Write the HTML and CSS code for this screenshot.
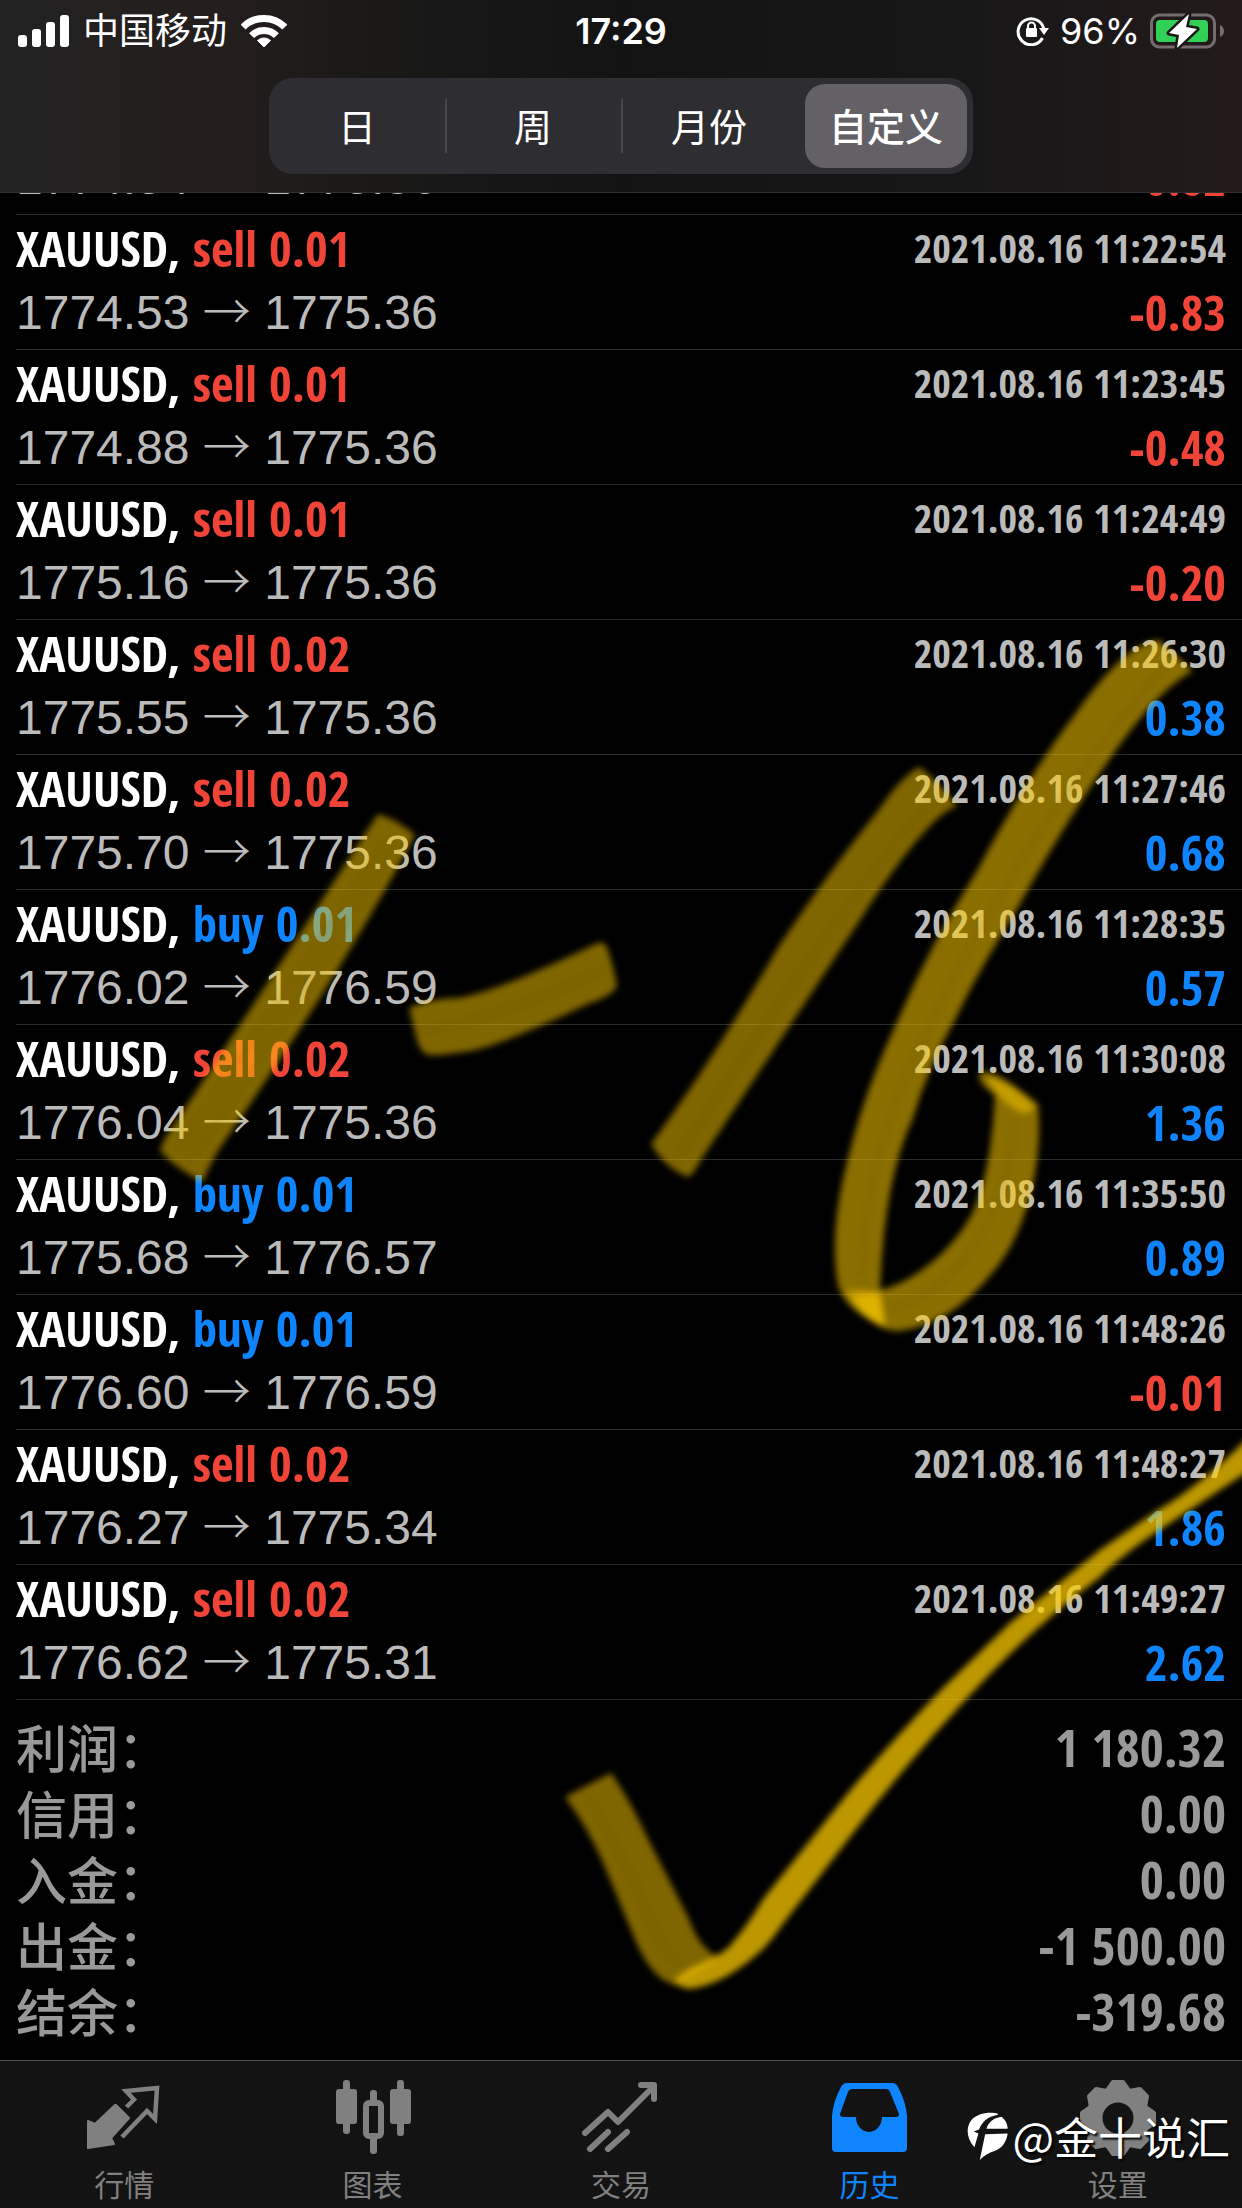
FILE: index.html
```html
<!DOCTYPE html>
<html lang="zh-CN">
<head>
<meta charset="UTF-8">
<meta name="viewport" content="width=device-width, initial-scale=1.0">
<title>历史</title>
<link rel="stylesheet" href="styles.css">
</head>
<body>
<header class="header">
    <div class="status">
        <div class="status-left">
            <svg width="51" height="32" viewBox="0 0 51 32" fill="#fff">
                <rect x="0" y="20" width="9" height="12" rx="3"/>
                <rect x="14" y="14" width="9" height="18" rx="3"/>
                <rect x="28" y="7" width="9" height="25" rx="3"/>
                <rect x="42" y="0" width="9" height="32" rx="3"/>
            </svg>
            <span>中国移动</span>
            <svg width="46" height="34" viewBox="0 0 46 34" fill="none" stroke="#fff" stroke-width="7">
                <path d="M2.1 13.1A29.5 29.5 0 0 1 43.9 13.1"/>
                <path d="M10.6 21.6A17.5 17.5 0 0 1 35.4 21.6"/>
                <path d="M23 33L16.5 26.5A9.5 9.5 0 0 1 29.5 26.5Z" fill="#fff" stroke-width="1" stroke-linejoin="round"/>
            </svg>
        </div>
        <div class="clock">17:29</div>
        <div class="status-right">
            <svg width="34" height="30" viewBox="0 0 34 30">
                <path d="M26.5 22A13 13 0 1 1 28 14" fill="none" stroke="#fff" stroke-width="3"/>
                <path d="M23 12H33L28 19Z" fill="#fff"/>
                <rect x="10" y="12" width="11" height="9" rx="1" fill="#fff"/>
                <path d="M12 13V10A3.5 3.5 0 0 1 19 10V13" fill="none" stroke="#fff" stroke-width="2"/>
            </svg>
            <span>96%</span>
            <svg width="74" height="36" viewBox="0 0 74 36">
                <rect x="1.5" y="2" width="63" height="32" rx="8" fill="none" stroke="#756d6d" stroke-width="3"/>
                <rect x="6" y="7" width="52" height="22" rx="4" fill="#31d158"/>
                <path d="M70 12Q74 14 74 18T70 24Z" fill="#756d6d"/>
                <path d="M39 1L19 20L29 22L27 35L47 16L36 14Z" fill="#fff" stroke="#1c1818" stroke-width="5" paint-order="stroke" stroke-linejoin="round"/>
            </svg>
        </div>
    </div>
    <div class="segments">
        <button type="button">日</button>
        <button type="button">周</button>
        <button type="button">月份</button>
        <button type="button" class="selected">自定义</button>
    </div>
</header>

<main class="history">
    <ul class="deals">
        <li>
            <div class="line"><span class="price">1774.54 <span class="arrow">→</span> 1775.36</span><span class="value sell">-0.82</span></div>
        </li>
        <li>
            <div class="line"><span class="symbol">XAUUSD, <span class="sell">sell 0.01</span></span><time>2021.08.16 11:22:54</time></div>
            <div class="line"><span class="price">1774.53 <span class="arrow">→</span> 1775.36</span><span class="value sell">-0.83</span></div>
        </li>
        <li>
            <div class="line"><span class="symbol">XAUUSD, <span class="sell">sell 0.01</span></span><time>2021.08.16 11:23:45</time></div>
            <div class="line"><span class="price">1774.88 <span class="arrow">→</span> 1775.36</span><span class="value sell">-0.48</span></div>
        </li>
        <li>
            <div class="line"><span class="symbol">XAUUSD, <span class="sell">sell 0.01</span></span><time>2021.08.16 11:24:49</time></div>
            <div class="line"><span class="price">1775.16 <span class="arrow">→</span> 1775.36</span><span class="value sell">-0.20</span></div>
        </li>
        <li>
            <div class="line"><span class="symbol">XAUUSD, <span class="sell">sell 0.02</span></span><time>2021.08.16 11:26:30</time></div>
            <div class="line"><span class="price">1775.55 <span class="arrow">→</span> 1775.36</span><span class="value buy">0.38</span></div>
        </li>
        <li>
            <div class="line"><span class="symbol">XAUUSD, <span class="sell">sell 0.02</span></span><time>2021.08.16 11:27:46</time></div>
            <div class="line"><span class="price">1775.70 <span class="arrow">→</span> 1775.36</span><span class="value buy">0.68</span></div>
        </li>
        <li>
            <div class="line"><span class="symbol">XAUUSD, <span class="buy">buy 0.01</span></span><time>2021.08.16 11:28:35</time></div>
            <div class="line"><span class="price">1776.02 <span class="arrow">→</span> 1776.59</span><span class="value buy">0.57</span></div>
        </li>
        <li>
            <div class="line"><span class="symbol">XAUUSD, <span class="sell">sell 0.02</span></span><time>2021.08.16 11:30:08</time></div>
            <div class="line"><span class="price">1776.04 <span class="arrow">→</span> 1775.36</span><span class="value buy">1.36</span></div>
        </li>
        <li>
            <div class="line"><span class="symbol">XAUUSD, <span class="buy">buy 0.01</span></span><time>2021.08.16 11:35:50</time></div>
            <div class="line"><span class="price">1775.68 <span class="arrow">→</span> 1776.57</span><span class="value buy">0.89</span></div>
        </li>
        <li>
            <div class="line"><span class="symbol">XAUUSD, <span class="buy">buy 0.01</span></span><time>2021.08.16 11:48:26</time></div>
            <div class="line"><span class="price">1776.60 <span class="arrow">→</span> 1776.59</span><span class="value sell">-0.01</span></div>
        </li>
        <li>
            <div class="line"><span class="symbol">XAUUSD, <span class="sell">sell 0.02</span></span><time>2021.08.16 11:48:27</time></div>
            <div class="line"><span class="price">1776.27 <span class="arrow">→</span> 1775.34</span><span class="value buy">1.86</span></div>
        </li>
        <li>
            <div class="line"><span class="symbol">XAUUSD, <span class="sell">sell 0.02</span></span><time>2021.08.16 11:49:27</time></div>
            <div class="line"><span class="price">1776.62 <span class="arrow">→</span> 1775.31</span><span class="value buy">2.62</span></div>
        </li>
    </ul>
    <dl class="totals">
        <div><dt>利润：</dt><dd>1 180.32</dd></div>
        <div><dt>信用：</dt><dd>0.00</dd></div>
        <div><dt>入金：</dt><dd>0.00</dd></div>
        <div><dt>出金：</dt><dd>-1 500.00</dd></div>
        <div><dt>结余：</dt><dd>-319.68</dd></div>
    </dl>
</main>

<nav class="tabs">
    <a href="#quotes">
        <svg width="80" height="80" viewBox="0 0 80 80">
            <path d="M32 27L45 40L27 60L30 66L4 70L4 43L11 46L31 27Z" fill="currentColor" stroke="currentColor" stroke-width="2" stroke-linejoin="round"/>
            <path d="M42.5 29L50 21.5L42 13L73 10L71 41L63 33L38 59" fill="none" stroke="currentColor" stroke-width="4.5"/>
        </svg>
        <span>行情</span>
    </a>
    <a href="#charts">
        <svg width="80" height="80" viewBox="0 0 80 80" fill="currentColor">
            <rect x="3" y="11" width="21" height="35" rx="3"/>
            <rect x="10" y="2" width="7" height="54" rx="3"/>
            <rect x="57" y="11" width="21" height="35" rx="3"/>
            <rect x="64" y="2" width="7" height="56" rx="3"/>
            <rect x="33" y="25" width="15" height="33" rx="3" fill="none" stroke="currentColor" stroke-width="6"/>
            <rect x="37" y="12" width="7" height="15" rx="3"/>
            <rect x="37" y="58" width="7" height="18" rx="3"/>
        </svg>
        <span>图表</span>
    </a>
    <a href="#trade">
        <svg width="80" height="80" viewBox="0 0 80 80" fill="none" stroke="currentColor" stroke-width="6" stroke-linecap="round">
            <path d="M4 55L27 34L37 44L72 9M60 7H73V21" stroke-linejoin="round"/>
            <path d="M9 71L27 54M27 71L46 54"/>
        </svg>
        <span>交易</span>
    </a>
    <a href="#history" class="active">
        <svg width="80" height="80" viewBox="0 0 80 80" fill="currentColor">
            <path fill-rule="evenodd" d="M18 5H63Q67 5 69 9Q77 24 78 38V70Q78 74 74 74H7Q3 74 3 70V38Q4 24 12 9Q14 5 18 5ZM24 11Q20 11 19 14L11 36Q11 39 14 39H27A13 15 0 0 0 53 39H67Q70 39 70 36L61 14Q60 11 57 11Z"/>
        </svg>
        <span>历史</span>
    </a>
    <a href="#settings">
        <svg width="80" height="80" viewBox="0 0 80 80" fill="currentColor" stroke="currentColor">
            <defs><path id="tooth" d="M-5 -36H5L12 -26H-12Z" stroke-width="4" stroke-linejoin="round"/></defs>
            <g transform="translate(40 40)">
                <circle r="23.5" fill="none" stroke-width="16"/>
                <use href="#tooth"/>
                <use href="#tooth" transform="rotate(45)"/>
                <use href="#tooth" transform="rotate(90)"/>
                <use href="#tooth" transform="rotate(135)"/>
                <use href="#tooth" transform="rotate(180)"/>
                <use href="#tooth" transform="rotate(225)"/>
                <use href="#tooth" transform="rotate(270)"/>
                <use href="#tooth" transform="rotate(315)"/>
            </g>
        </svg>
        <span>设置</span>
    </a>
</nav>

<!-- marker strokes drawn over the list -->
<svg class="marker" viewBox="0 0 1242 2208">
    <defs>
        <filter id="soft" x="-5%" y="-5%" width="110%" height="110%"><feGaussianBlur stdDeviation="3"/></filter>
    </defs>
    <g filter="url(#soft)" fill="#ffcc00" fill-opacity="0.5">
        <path d="M378 814Q398 820 415 835Q350 960 220 1148Q210 1163 203 1182Q178 1170 160 1151L164 1140Q270 980 378 814Z"/>
        <path d="M409 1008Q430 998 457 998Q490 995 600 942L606 945Q613 963 617 986Q612 996 590 1003Q500 1046 470 1051Q440 1056 428 1055Q420 1052 417 1040Z"/>
        <path d="M919 767Q940 782 957 806Q942 812 929 827Q900 857 858 923L700 1161Q694 1174 688 1177Q665 1168 651 1144Q715 1057 779 946Q830 870 878 811Q900 778 919 767Z"/>
        <path fill-opacity="0.54" d="M1159 640L1193 671Q1160 688 1116 750Q1065 822 1017 909Q975 977 957 1016Q928 1067 913 1118Q884 1180 880 1290L886 1326Q850 1316 838 1286Q828 1230 850 1151Q865 1090 898 1020Q930 945 977 871Q1025 780 1076 713Q1125 643 1159 640Z"/>
        <path fill-opacity="0.54" d="M852 1298L880 1290Q907 1284 937 1258Q967 1230 977 1202Q992 1160 995 1095Q978 1084 979 1074Q990 1064 1038 1104Q1042 1144 1032 1188Q1020 1240 993 1272Q950 1326 898 1331Q870 1330 852 1298Z"/>
        <path fill-opacity="0.5" d="M986 1076Q1012 1082 1036 1108L1024 1114Q997 1102 986 1076Z"/>
        <path fill-opacity="0.4" d="M844 1292Q866 1285 880 1298L884 1326Q862 1316 844 1292Z"/>
        <path d="M565 1797L611 1773Q630 1800 647 1837L688 1917Q700 1950 719 1957Q700 1972 672 1984Q650 1977 634 1937L607 1872Q590 1830 565 1797Z"/>
        <path fill-opacity="0.74" d="M674 1984Q674 1976 700 1964Q715 1958 728 1948Q746 1928 764 1898L853 1787Q900 1732 943 1688L1010 1623L1100 1550L1158 1510Q1200 1486 1250 1436V1470L1167 1525Q1125 1552 1100 1577Q1040 1622 988 1676Q915 1752 853 1833L782 1925Q768 1946 755 1956Q720 1986 688 1989Z"/>
    </g>
    <g fill="none" stroke="#5c4600" stroke-width="3" stroke-opacity="0.22" filter="url(#soft)">
        <path d="M398 838Q330 960 190 1160"/>
        <path d="M385 842Q310 960 178 1148"/>
        <path d="M420 1030Q490 1022 605 970"/>
        <path d="M936 798Q850 890 676 1160"/>
        <path d="M1165 665Q1000 860 900 1090Q860 1200 862 1280"/>
        <path d="M1014 1120Q1012 1200 960 1265Q920 1305 890 1308"/>
        <path d="M590 1800Q620 1850 655 1930Q665 1955 680 1962"/>
    </g>
</svg>

<div class="watermark">
    <svg width="41" height="49" viewBox="0 0 122 146" fill="#fff">
        <path d="M92 5C70 -2 30 2 12 25C-5 50 0 80 22 105L34 64L20 58L36 52C44 30 60 14 92 8Z"/>
        <path d="M102 14C116 24 121 38 121 50L58 50C62 32 78 18 102 14Z"/>
        <path d="M54 66L121 64C118 88 105 108 82 116C65 121 50 130 38 143Z"/>
    </svg>
    <span>@金十说汇</span>
</div>
</body>
</html>
```
FILE: styles.css
```css
* {
    box-sizing: border-box;
}

body {
    display: flex;
    flex-direction: column;
    position: relative;
    height: 100vh;
    margin: 0;
    overflow: hidden;
    background-color: #000;
    color: #fff;
    font-family: "Liberation Sans", "Noto Sans CJK SC", sans-serif;
}

svg {
    display: block;
    flex: none;
}

/* header */
.header {
    flex: none;
    padding-bottom: 18px;
    border-bottom: 1px solid #303030;
    background: linear-gradient(to right, #222 0%, #241e1d 17%, #1a1918 30%, #131313 50%, #181717 78%, #241a1b 100%);
}

.status {
    display: grid;
    grid-template-columns: 1fr auto 1fr;
    align-items: center;
    height: 60px;
    padding: 2px 18px 0;
    font-family: Inter, "Noto Sans CJK SC", sans-serif;
    font-size: 36px;
    line-height: 40px;
}

.status-left,
.status-right {
    display: flex;
    align-items: center;
    gap: 14px;
}

.status-right {
    justify-content: flex-end;
    gap: 10px;
}

.clock {
    font-weight: 600;
}

.segments {
    display: grid;
    grid-template-columns: repeat(4, 1fr);
    max-width: 704px;
    height: 96px;
    margin: 18px auto 0;
    padding: 6px 0;
    border-radius: 24px;
    background-color: #2e2d31;
}

.segments button {
    position: relative;
    padding: 0 0 3px;
    border: 0;
    border-radius: 20px;
    background: none;
    color: #fff;
    font-family: "Noto Sans CJK SC", sans-serif;
    font-size: 38px;
    line-height: 40px;
}

.segments button + button:not(.selected)::before {
    content: "";
    position: absolute;
    left: 0;
    top: 15px;
    bottom: 15px;
    width: 2px;
    background-color: #48474b;
}

.segments .selected {
    margin: 0 6px 0 8px;
    background-color: #636166;
    font-weight: 500;
}

/* deals */
.history {
    display: flex;
    flex: 1;
    flex-direction: column;
    justify-content: flex-end;
    min-height: 0;
    overflow: hidden;
}

.deals {
    margin: 0 0 0 16px;
    padding: 0;
    list-style: none;
}

.deals li {
    padding: 2px 16px 4px 0;
    border-bottom: 1px solid #2c2c2c;
}

.line {
    display: flex;
    justify-content: space-between;
    height: 64px;
    line-height: 64px;
    white-space: nowrap;
}

.symbol,
.value,
.line time,
.totals dd {
    font-family: "Open Sans Condensed", "Liberation Sans", sans-serif;
    font-size: 49px;
    font-weight: bold;
    line-height: 62px;
}

.line time {
    color: #bbb;
    font-size: 40px;
}

.price {
    color: #bbb;
    font-size: 48px;
}

.arrow {
    font-family: "Noto Sans CJK SC", sans-serif;
    font-weight: 300;
    line-height: 1;
}

.sell {
    color: #f04438;
}

.buy {
    color: #0f84ff;
}

/* totals */
.totals {
    margin: 0;
    padding: 15px 16px;
    color: #999;
}

.totals div {
    display: flex;
    justify-content: space-between;
    height: 66px;
}

.totals dt {
    font-family: "Noto Sans CJK SC", sans-serif;
    font-size: 51px;
    font-weight: 500;
    line-height: 62px;
}

.totals dd {
    margin: 0;
    font-size: 52px;
    line-height: 64px;
}

/* bottom tabs */
.tabs {
    display: grid;
    flex: none;
    grid-template-columns: repeat(5, 1fr);
    height: 148px;
    padding-top: 17px;
    border-top: 1px solid #4a4a4a;
    background-color: #131313;
}

.tabs a {
    display: flex;
    flex-direction: column;
    align-items: center;
    gap: 5px;
    color: #808080;
    font-family: "Noto Sans CJK SC", sans-serif;
    font-size: 30px;
    line-height: 40px;
    text-decoration: none;
}

.tabs .active {
    color: #0f84ff;
}

.marker {
    position: absolute;
    left: 0;
    top: 0;
    width: 100%;
    height: 100%;
    pointer-events: none;
}

.watermark {
    display: flex;
    position: absolute;
    right: 12px;
    bottom: 42px;
    align-items: center;
    gap: 4px;
    font-family: "Noto Sans CJK SC", sans-serif;
    font-size: 44px;
    line-height: 60px;
    text-shadow: 2px 2px 2px #000;
}
```
